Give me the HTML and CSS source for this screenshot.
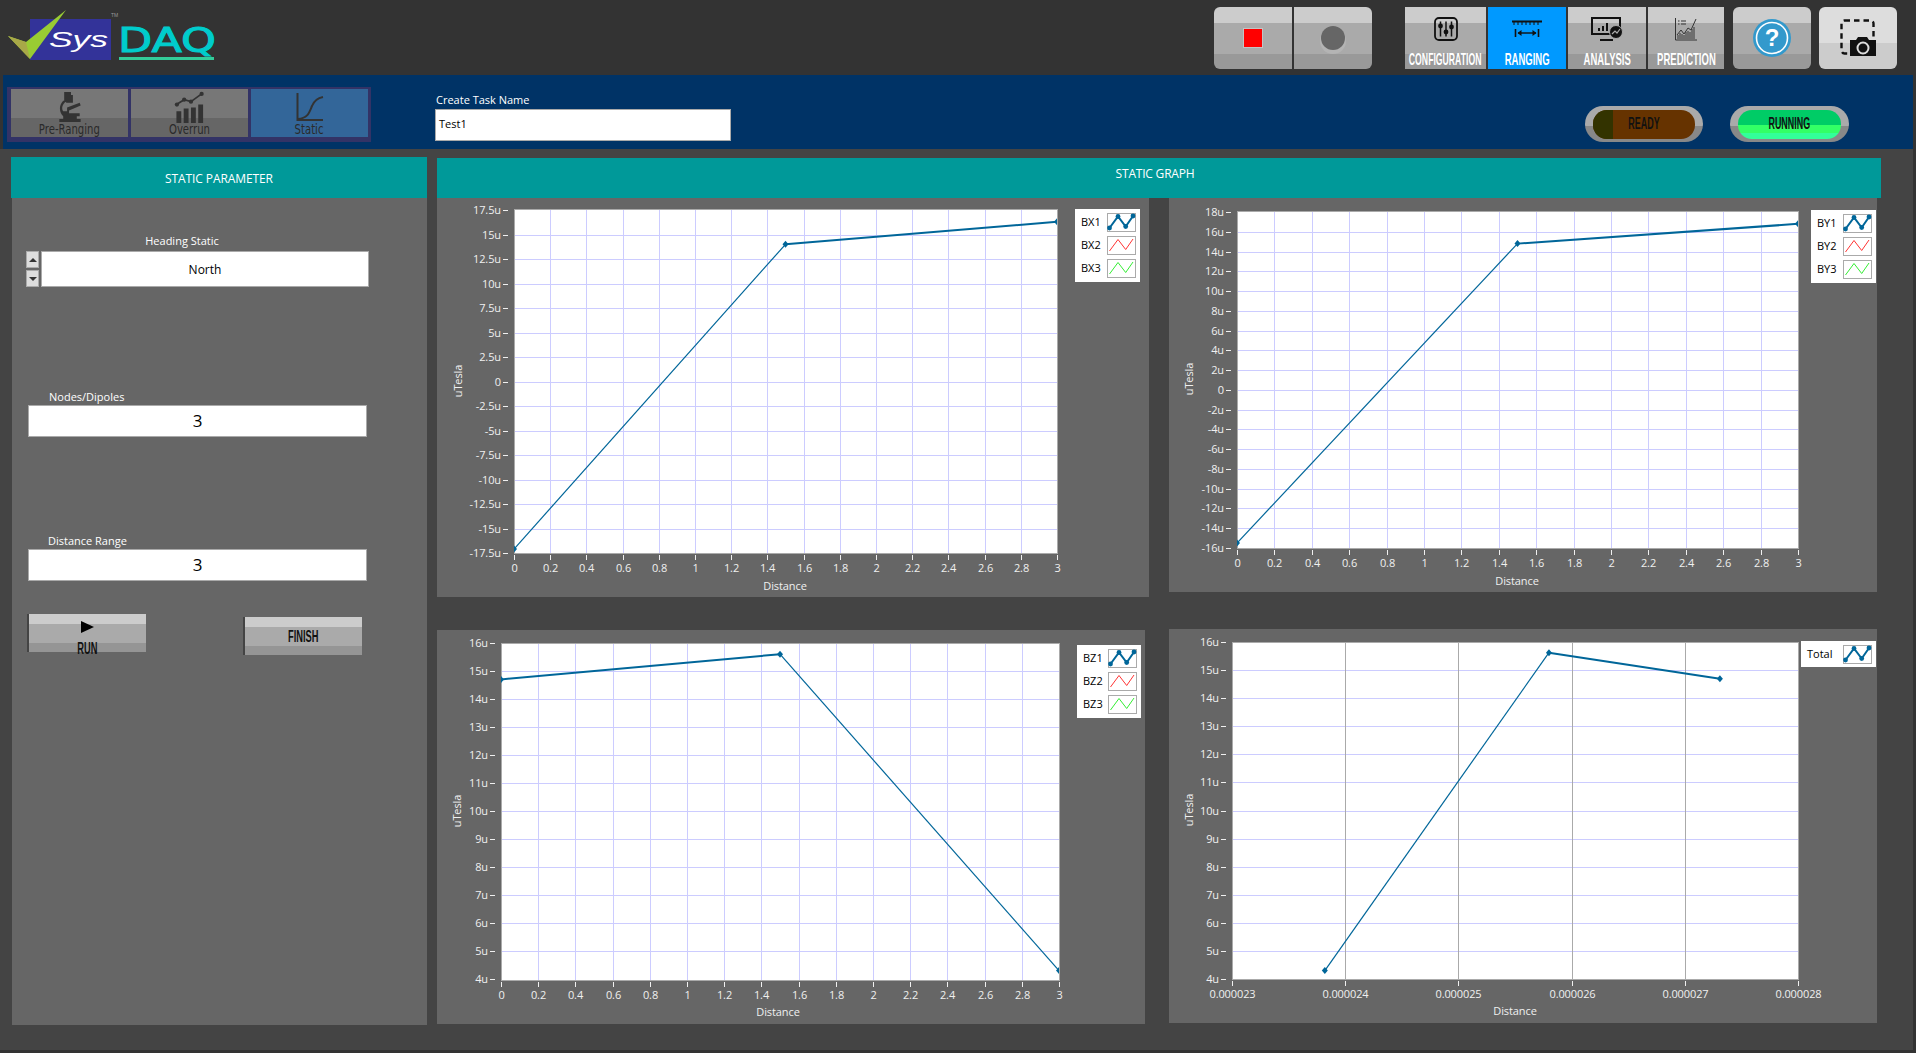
FILE: index.html
```html
<!DOCTYPE html>
<html>
<head>
    <title>SysDAQ Ranging</title>
    <link rel="stylesheet" href="styles.css">
</head>
<body>
    <div class="topbar">
        <svg class="logo" width="220" height="66" viewBox="0 7 220 66">
            <rect x="30" y="19" width="81" height="41" fill="#333399"/>
            <path d="M8 36 L26 42 L66 10 L30 59 Z" fill="#99cc33"/>
            <path d="M8 36 L26 42 L30 59 Z" fill="#a8a848"/>
            <text x="49" y="47" class="logo-sys" textLength="59" lengthAdjust="spacingAndGlyphs">Sys</text>
            <text x="111" y="17" class="logo-tm">TM</text>
            <text x="118" y="52" class="logo-daq" textLength="98" lengthAdjust="spacingAndGlyphs">DAQ</text>
            <rect x="119" y="57" width="95" height="3" fill="#33cc99"/>
        </svg>
        <div class="run-group">
            <div class="face square-left">
                <span class="stop-icon"></span>
            </div>
            <div class="face square-right">
                <span class="rec-icon"></span>
            </div>
        </div>
        <div class="nav">
            <div class="face nav-item nav-config">
                <div class="nav-icon">
                    <svg width="24" height="24" viewBox="0 0 24 24">
                        <rect x="1" y="1" width="22" height="22" rx="4" fill="none" stroke="#111" stroke-width="1.8"/>
                        <path d="M6.5 4.5V19.5M12 4.5V19.5M17.5 4.5V19.5" stroke="#111" stroke-width="1.5"/>
                        <circle cx="6.5" cy="9" r="2.4" fill="#111"/>
                        <circle cx="12" cy="15" r="2.4" fill="#111"/>
                        <circle cx="17.5" cy="10" r="2.4" fill="#111"/>
                    </svg>
                </div>
                <span class="cond nav-label label-config">CONFIGURATION</span>
            </div>
            <div class="face nav-item nav-active">
                <div class="nav-icon">
                    <svg width="30" height="18" viewBox="0 0 30 18">
                        <path d="M0 1.5H30" stroke="#111" stroke-width="2"/>
                        <path d="M2 2V5M6 2V5M10 2V5M14 2V5M18 2V5M22 2V5M26 2V5" stroke="#111" stroke-width="1"/>
                        <path d="M3.5 9V17M26.5 9V17" stroke="#111" stroke-width="1.6"/>
                        <path d="M6 13H24" stroke="#111" stroke-width="1.4"/>
                        <path d="M5.5 13L9.5 10V16ZM24.5 13L20.5 10V16Z" fill="#111"/>
                    </svg>
                </div>
                <span class="cond nav-label">RANGING</span>
            </div>
            <div class="face nav-item">
                <div class="nav-icon">
                    <svg width="32" height="24" viewBox="0 0 32 24">
                        <path d="M1 1H29V17H1Z" fill="none" stroke="#111" stroke-width="2"/>
                        <path d="M9 23H22" stroke="#111" stroke-width="2"/>
                        <path d="M7 14V11H9V14ZM11 14V9H13V14ZM15 14V6H17V14Z" fill="#111"/>
                        <circle cx="25" cy="15" r="6.5" fill="#111" stroke="#aaa" stroke-width="1"/>
                        <path d="M21 17L24 14L26 16L29 12" fill="none" stroke="#aaa" stroke-width="1.2"/>
                    </svg>
                </div>
                <span class="cond nav-label">ANALYSIS</span>
            </div>
            <div class="face nav-item nav-predict">
                <div class="nav-icon">
                    <svg width="24" height="24" viewBox="0 0 24 24">
                        <path d="M1.5 1V23H23" fill="none" stroke="#333" stroke-width="1"/>
                        <path d="M4 4H5.5M7 4H12M4 7H5.5M7 7H12" stroke="#333" stroke-width="1"/>
                        <path d="M3 18L7 13L10 17L14 11L17 13L22 2" fill="none" stroke="#333" stroke-width="1"/>
                        <path d="M4 22V18M6 22V16M8 22V17M10 22V18M12 22V15M14 22V14M16 22V15M18 22V12M20 22V10" stroke="#333" stroke-width="1"/>
                    </svg>
                </div>
                <span class="cond nav-label">PREDICTION</span>
            </div>
        </div>
        <div class="face round-btn help-btn">
            <svg width="40" height="40" viewBox="0 0 40 40">
                <circle cx="20" cy="20" r="19" fill="#3399cc"/>
                <circle cx="20" cy="20" r="15.5" fill="#3399cc" stroke="#fff" stroke-width="1.6"/>
                <text x="20" y="28" class="help-mark">?</text>
            </svg>
        </div>
        <div class="round-btn camera-btn">
            <svg width="38" height="38" viewBox="0 0 38 38">
                <rect x="1.500" y="1.500" width="32" height="33" rx="3" fill="none" stroke="#111" stroke-width="2.4" stroke-dasharray="5.5 4"/>
                <path d="M10 21H16L18 18H27L29 21H36V37H10Z" fill="#111"/>
                <circle cx="23" cy="29" r="5.5" fill="none" stroke="#ddd" stroke-width="2"/>
            </svg>
        </div>
    </div>

    <div class="band">
        <div class="tabs">
            <div class="tab">
                <svg class="tab-icon" width="24" height="33" viewBox="0 0 24 33">
                    <path d="M6 1H13V4H15V12H8V11C4 13 3 18 5 21H9V17L22 12L23 15L11 20V23H22V26H19V29H23V32H1V29H5V26C1 22 0 15 5 10H6Z" fill="#333"/>
                </svg>
                <span class="cond tab-label">Pre-Ranging</span>
            </div>
            <div class="tab">
                <svg class="tab-icon" width="32" height="33" viewBox="0 0 32 33">
                    <path d="M2 21H7V33H2ZM9.5 18H14.5V33H9.5ZM17 17H22V33H17ZM24.500 14H29.500V33H24.500Z" fill="#333"/>
                    <path d="M2 14L10 9L17 11L28 3" fill="none" stroke="#333" stroke-width="1.8"/>
                    <circle cx="2.500" cy="14" r="2.200" fill="#333"/>
                    <circle cx="10" cy="9" r="2.200" fill="#333"/>
                    <circle cx="17" cy="11" r="2.200" fill="#333"/>
                    <circle cx="28" cy="3" r="2.200" fill="#333"/>
                </svg>
                <span class="cond tab-label">Overrun</span>
            </div>
            <div class="tab tab-active">
                <svg class="tab-icon" width="28" height="30" viewBox="0 0 28 30">
                    <path d="M1.500 1V28H27" fill="none" stroke="#333" stroke-width="2"/>
                    <path d="M2 27C12 26 13 21 16 14C18 9 22 6 27 5" fill="none" stroke="#333" stroke-width="2"/>
                </svg>
                <span class="cond tab-label">Static</span>
            </div>
        </div>
        <div class="task">
            <div class="task-label">Create Task Name</div>
            <div class="task-input">Test1</div>
        </div>
        <div class="pill pill-ready">
            <div class="pill-inner">
                <span class="pill-dark"></span>
                <span class="cond pill-text">READY</span>
            </div>
        </div>
        <div class="pill pill-running">
            <div class="pill-inner">
                <span class="cond pill-text">RUNNING</span>
            </div>
        </div>
    </div>

    <div class="main">
        <div class="side">
            <div class="head">STATIC PARAMETER</div>
            <div class="side-body">
                <div class="field-label heading-label">Heading Static</div>
                <div class="ring">
                    <div class="spin">
                        <span class="spin-btn"><i class="arrow-up"></i></span>
                        <span class="spin-btn"><i class="arrow-down"></i></span>
                    </div>
                    <div class="ring-value">North</div>
                </div>
                <div class="field-label nodes-label">Nodes/Dipoles</div>
                <div class="num-input">3</div>
                <div class="field-label range-label">Distance Range</div>
                <div class="num-input">3</div>
                <div class="actions">
                    <div class="action run-btn">
                        <i class="play"></i>
                        <span class="cond action-text">RUN</span>
                    </div>
                    <div class="action finish-btn">
                        <span class="cond action-text">FINISH</span>
                    </div>
                </div>
            </div>
        </div>
        <div class="content">
            <div class="head head-graph">STATIC GRAPH</div>
            <div class="graphs">
                <div class="chart chart-x" id="chartX"></div>
                <div class="chart chart-y" id="chartY"></div>
                <div class="chart chart-z" id="chartZ"></div>
                <div class="chart chart-total" id="chartTotal"></div>
            </div>
        </div>
    </div>

    <script src="charts.js"></script>
</body>
</html>
```

FILE: styles.css
```css
* {
    box-sizing: border-box;
}
html, body {
    margin: 0;
    padding: 0;
}
body {
    width: 1916px;
    height: 1053px;
    overflow: hidden;
    background-color: #333333;
    font-family: "Open Sans", sans-serif;
    font-size: 11px;
}

/* condensed button lettering */
.cond {
    display: inline-block;
    font-family: "Liberation Sans", sans-serif;
    font-weight: bold;
    white-space: nowrap;
    transform: scaleX(0.6);
}

/* top bar */
.topbar {
    display: flex;
    align-items: flex-start;
    height: 74px;
    padding-top: 7px;
}
.logo {
    margin-right: 994px;
    flex: none;
}
.logo-sys {
    font-family: "Liberation Sans", sans-serif;
    font-style: italic;
    font-size: 22px;
    fill: #ffffff;
}
.logo-tm {
    font-family: "Liberation Sans", sans-serif;
    font-size: 5px;
    fill: #999999;
}
.logo-daq {
    font-family: "DejaVu Sans", sans-serif;
    font-size: 34px;
    fill: #00cccc;
    stroke: #00cccc;
    stroke-width: 1px;
}
.face {
    background: linear-gradient(#cccccc 0 16px, #aaaaaa 16px 47px, #999999 47px);
}
.run-group {
    display: flex;
    gap: 2px;
    flex: none;
}
.square-left, .square-right {
    display: flex;
    align-items: center;
    justify-content: center;
    width: 78px;
    height: 62px;
}
.square-left {
    border-radius: 6px 0 0 6px;
}
.square-right {
    border-radius: 0 6px 6px 0;
}
.stop-icon {
    width: 18px;
    height: 18px;
    background-color: #ff0000;
    box-shadow: 0 0 0 1px #c4c4c4;
}
.rec-icon {
    width: 24px;
    height: 24px;
    border-radius: 50%;
    background-color: #666666;
    box-shadow: 0 3px 0 1px #b4b4b4;
}
.nav {
    display: flex;
    gap: 2px;
    margin-left: 33px;
    flex: none;
}
.nav-item {
    display: flex;
    flex-direction: column;
    align-items: center;
    width: 78px;
    height: 62px;
}
.nav-config {
    width: 81px;
}
.nav-predict {
    width: 76px;
}
.nav-active {
    background: #0099ff;
}
.nav-icon {
    display: flex;
    align-items: center;
    justify-content: center;
    height: 44px;
}
.nav-label {
    font-size: 17px;
    line-height: 17px;
    color: #ffffff;
    transform: scaleX(0.56);
}
.label-config {
    transform: scaleX(0.51);
}
.round-btn {
    display: flex;
    align-items: center;
    justify-content: center;
    width: 78px;
    height: 62px;
    border-radius: 6px;
    flex: none;
}
.help-btn {
    margin-left: 9px;
}
.camera-btn {
    margin-left: 8px;
    padding-left: 2px;
    background: linear-gradient(#dddddd 0 36px, #cccccc 36px);
}
.help-mark {
    font-family: "Liberation Sans", sans-serif;
    font-weight: bold;
    font-size: 24px;
    text-anchor: middle;
    fill: #ffffff;
}

/* blue band */
.band {
    display: flex;
    align-items: flex-start;
    width: 1910px;
    height: 74px;
    margin: 1px 0 0 3px;
    background-color: #003366;
}
.tabs {
    display: flex;
    gap: 3px;
    width: 364px;
    height: 55px;
    margin: 12px 0 0 4px;
    padding: 2px 3px 5px 4px;
    background-color: #333366;
    flex: none;
}
.tab {
    display: flex;
    flex-direction: column;
    align-items: center;
    width: 117px;
    height: 48px;
    background: linear-gradient(#777777 0 29px, #666666 29px);
}
.tab-active {
    background: #336699;
}
.tab-icon {
    height: 32px;
    margin-top: 2px;
    flex: none;
}
.tab-label {
    margin-top: -1px;
    font-family: "DejaVu Sans", sans-serif;
    font-weight: normal;
    font-size: 14px;
    line-height: 14px;
    color: #2a2a2a;
    transform: scaleX(0.72);
}
.task {
    width: 296px;
    margin: 17px 0 0 64px;
    flex: none;
}
.task-label {
    height: 17px;
    padding-left: 1px;
    line-height: 16px;
    color: #ffffff;
}
.task-input {
    height: 32px;
    padding-left: 3px;
    border: 1px solid #aaaaaa;
    background-color: #ffffff;
    line-height: 28px;
    color: #000000;
}
.pill {
    display: flex;
    align-items: center;
    height: 36px;
    margin-top: 31px;
    padding: 0 8px;
    border-radius: 18px;
    background: linear-gradient(#aaaaaa 0 20px, #888888 20px);
    flex: none;
}
.pill-ready {
    width: 118px;
    margin-left: 854px;
}
.pill-running {
    width: 119px;
    margin-left: 27px;
}
.pill-inner {
    display: flex;
    align-items: center;
    justify-content: center;
    width: 100%;
    height: 29px;
    border-radius: 14px;
    overflow: hidden;
    position: relative;
}
.pill-ready .pill-inner {
    background-color: #663300;
}
.pill-running .pill-inner {
    background: linear-gradient(#00cc66 0 15px, #33ff66 15px 23px, #33ff99 23px);
}
.pill-dark {
    position: absolute;
    left: 0;
    top: 0;
    width: 20px;
    height: 100%;
    background-color: #333300;
}
.pill-text {
    font-size: 16px;
    color: #111111;
    transform: scaleX(0.56);
}

/* main area */
.main {
    display: flex;
    width: 1913px;
    height: 901px;
    padding: 8px 0 0 11px;
    background-color: #444444;
}
.side {
    width: 416px;
    height: 868px;
    flex: none;
}
.head {
    height: 41px;
    background-color: #009999;
    color: #ffffff;
    font-size: 12px;
    letter-spacing: -0.1px;
    line-height: 43px;
    text-align: center;
}
.side-body {
    height: 827px;
    margin-left: 1px;
    padding: 34px 0 0 14px;
    background-color: #666666;
}
.field-label {
    height: 16px;
    line-height: 18px;
    color: #ffffff;
}
.heading-label {
    width: 312px;
    margin-bottom: 3px;
    text-align: center;
}
.ring {
    display: flex;
    gap: 2px;
    height: 36px;
}
.spin {
    display: flex;
    flex-direction: column;
    justify-content: space-between;
    width: 13px;
}
.spin-btn {
    display: flex;
    align-items: center;
    justify-content: center;
    height: 17px;
    background-color: #dddddd;
    border: 1px solid #aaaaaa;
}
.arrow-up, .arrow-down {
    width: 0;
    height: 0;
    border-left: 4px solid transparent;
    border-right: 4px solid transparent;
}
.arrow-up {
    border-bottom: 4px solid #333333;
}
.arrow-down {
    border-top: 4px solid #333333;
}
.ring-value {
    width: 328px;
    border: 1px solid #aaaaaa;
    background-color: #ffffff;
    color: #000000;
    font-size: 12px;
    line-height: 35px;
    text-align: center;
}
.nodes-label {
    margin: 101px 0 1px 23px;
}
.range-label {
    margin: 95px 0 1px 22px;
}
.num-input {
    width: 339px;
    height: 32px;
    margin-left: 2px;
    border: 1px solid #aaaaaa;
    background-color: #ffffff;
    color: #000000;
    font-size: 17px;
    line-height: 30px;
    text-align: center;
}
.actions {
    display: flex;
    align-items: flex-start;
    margin: 33px 0 0 1px;
}
.action {
    display: flex;
    flex-direction: column;
    align-items: center;
    justify-content: center;
    width: 119px;
    height: 38px;
    border-left: 2px solid #444444;
    background: linear-gradient(#cccccc 0 10px, #aaaaaa 10px 29px, #959595 29px);
}
.finish-btn {
    margin: 3px 0 0 97px;
}
.run-btn {
    justify-content: flex-start;
    padding-top: 7px;
}
.run-btn .action-text {
    margin-top: 9px;
}
.play {
    width: 0;
    height: 0;
    flex: none;
    border-left: 13px solid #000000;
    border-top: 6.5px solid transparent;
    border-bottom: 6.5px solid transparent;
}
.action-text {
    font-size: 16px;
    line-height: 13px;
    color: #111111;
    transform: scaleX(0.58);
}

/* graphs */
.content {
    width: 1444px;
    margin: 1px 0 0 10px;
    flex: none;
}
.head-graph {
    height: 40px;
    padding: 0 8px 9px 0;
    letter-spacing: -0.2px;
    line-height: 31px;
}
.graphs {
    display: grid;
    grid-template-columns: 732px 712px;
    grid-template-rows: 431px 394px;
}
.chart {
    background-color: #666666;
}
.chart svg {
    display: block;
}
.chart-x {
    width: 712px;
    height: 399px;
}
.chart-y {
    width: 708px;
    height: 394px;
}
.chart-z {
    width: 708px;
    height: 394px;
    margin-top: 1px;
}
.chart-total {
    width: 708px;
    height: 394px;
}
.tick-text, .axis-text {
    font-family: "Open Sans", sans-serif;
    font-size: 11px;
    letter-spacing: -0.1px;
    fill: #f0f0f0;
}
.legend-text {
    font-family: "Open Sans", sans-serif;
    font-size: 11px;
    fill: #000000;
}
```

FILE: charts.js
```js
// All coordinates are page pixels, the svg viewBox is set to the panel box
const charts = [
    {
        id: 'chartX', box: [437, 198, 712, 399], plot: [514, 209, 1057, 553],
        yTicks: [-17.5, 17.5, 2.5], xTicks: [0, 3, 0.2], tickPos: [210, 553],
        series: [[0, -17.1], [1.5, 14], [3, 16.3]],
        yLabelX: 462, yLabelY: 381, xLabelX: 785, xLabelY: 590,
        legend: { x: 1075, y: 209, w: 65, names: ['BX1', 'BX2', 'BX3'] }
    },
    {
        id: 'chartY', box: [1169, 198, 708, 394], plot: [1237, 211, 1798, 548],
        yTicks: [-16, 18, 2], xTicks: [0, 3, 0.2], tickPos: [212, 548],
        series: [[0, -15.5], [1.5, 14.8], [3, 16.8]],
        yLabelX: 1193, yLabelY: 379, xLabelX: 1517, xLabelY: 585,
        legend: { x: 1811, y: 210, w: 65, names: ['BY1', 'BY2', 'BY3'] }
    },
    {
        id: 'chartZ', box: [437, 630, 708, 394], plot: [501, 643, 1059, 980],
        yTicks: [4, 16, 1], xTicks: [0, 3, 0.2], tickPos: [643, 979],
        series: [[0, 14.7], [1.5, 15.6], [3, 4.3]],
        yLabelX: 461, yLabelY: 811, xLabelX: 778, xLabelY: 1016,
        legend: { x: 1077, y: 645, w: 64, names: ['BZ1', 'BZ2', 'BZ3'] }
    },
    {
        id: 'chartTotal', box: [1169, 629, 708, 394], plot: [1232, 642, 1798, 979],
        yTicks: [4, 16, 1], xTicks: [23, 28, 1], xScale: 1e-6, xDigits: 6, xGrid: '#aaaaaa', tickPos: [642, 979],
        series: [[23.82, 4.3], [25.8, 15.62], [27.31, 14.69]],
        yLabelX: 1193, yLabelY: 810, xLabelX: 1515, xLabelY: 1015,
        legend: { x: 1801, y: 641, w: 75, names: ['Total'] }
    }
];

const BLUE = '#006699';

function swatch(x, y, color, heavy) {
    const p = [[2.5, 15], [11, 3.500], [18.700, 13.500], [26, 3]].map(q => [x + q[0], y + q[1]]);
    let s = `<rect x="${x + 0.5}" y="${y + 0.5}" width="28" height="18" fill="#fff" stroke="#aaa"/>`;
    s += `<polyline points="${p.join(' ')}" fill="none" stroke="${color}" stroke-width="${heavy ? 2 : 1}"/>`;
    if (heavy) {
        p.forEach(q => { s += `<circle cx="${q[0]}" cy="${q[1]}" r="2.400" fill="${color}"/>`; });
    }
    return s;
}

function drawLegend(lg) {
    const colors = [BLUE, '#ff3333', '#33ee33'];
    const h = lg.names.length === 1 ? 26 : 73;
    let s = `<rect x="${lg.x}" y="${lg.y}" width="${lg.w}" height="${h}" fill="#fff"/>`;
    lg.names.forEach((name, i) => {
        const rowY = lg.y + 4 + i * 23;
        s += `<text class="legend-text" x="${lg.x + 6}" y="${rowY + 13}">${name}</text>`;
        s += swatch(lg.x + lg.w - 33, rowY, colors[i], i === 0);
    });
    return s;
}

function drawChart(c) {
    const [left, top, right, bottom] = c.plot;
    const [yMin, yMax, yStep] = c.yTicks;
    const [xMin, xMax, xStep] = c.xTicks;
    const mapX = v => left + (v - xMin) / (xMax - xMin) * (right - left);
    const mapY = v => c.tickPos[1] - (v - yMin) / (yMax - yMin) * (c.tickPos[1] - c.tickPos[0]);
    const clipId = c.id + 'Clip';

    let s = `<svg width="${c.box[2]}" height="${c.box[3]}" viewBox="${c.box.join(' ')}">`;
    s += `<clipPath id="${clipId}"><rect x="${left}" y="${top}" width="${right - left}" height="${bottom - top}"/></clipPath>`;
    s += `<rect x="${left + 0.5}" y="${top + 0.5}" width="${right - left}" height="${bottom - top}" fill="#fff"/>`;

    // horizontal grid and y ticks
    const yCount = Math.round((yMax - yMin) / yStep);
    for (let i = 0; i <= yCount; i++) {
        const v = yMin + i * yStep;
        const y = Math.round(mapY(v)) + 0.5;
        if (i > 0 && i < yCount) {
            s += `<path d="M${left} ${y}H${right}" stroke="#ccccff"/>`;
        }
        s += `<path d="M${left - 11} ${y}H${left - 6}" stroke="#f0f0f0"/>`;
        s += `<text class="tick-text" x="${left - 13}" y="${y + 3.500}" text-anchor="end">${v === 0 ? '0' : v + 'u'}</text>`;
    }

    // vertical grid and x ticks
    const xCount = Math.round((xMax - xMin) / xStep);
    for (let i = 0; i <= xCount; i++) {
        const v = xMin + i * xStep;
        const x = Math.round(mapX(v)) + 0.5;
        if (i > 0 && i < xCount) {
            s += `<path d="M${x} ${top}V${bottom}" stroke="${c.xGrid || '#ccccff'}"/>`;
        }
        const label = c.xScale ? (v * c.xScale).toFixed(c.xDigits) : String(parseFloat(v.toFixed(1)));
        s += `<path d="M${x} ${bottom + 2}V${bottom + 7}" stroke="#f0f0f0"/>`;
        s += `<text class="tick-text" x="${x}" y="${bottom + 19}" text-anchor="middle">${label}</text>`;
    }

    s += `<rect x="${left + 0.5}" y="${top + 0.5}" width="${right - left}" height="${bottom - top}" fill="none" stroke="#aaa"/>`;

    // data line, the steep segments come out thinner on this graph
    s += `<g clip-path="url(#${clipId})">`;
    const pts = c.series.map(p => [mapX(p[0]), mapY(p[1])]);
    pts.forEach((p, i) => {
        if (i > 0) {
            const q = pts[i - 1];
            const steep = Math.abs(p[1] - q[1]) > Math.abs(p[0] - q[0]) / 2;
            s += `<line x1="${q[0]}" y1="${q[1]}" x2="${p[0]}" y2="${p[1]}" stroke="${BLUE}" stroke-width="${steep ? 1.2 : 2}"/>`;
        }
        s += `<path d="M${p[0] - 3} ${p[1]}L${p[0]} ${p[1] - 3.500}L${p[0] + 3} ${p[1]}L${p[0]} ${p[1] + 3.500}Z" fill="${BLUE}"/>`;
    });
    s += '</g>';

    s += `<text class="axis-text" x="${c.xLabelX}" y="${c.xLabelY}" text-anchor="middle">Distance</text>`;
    s += `<text class="axis-text" x="${c.yLabelX}" y="${c.yLabelY}" text-anchor="middle" transform="rotate(-90 ${c.yLabelX} ${c.yLabelY})">uTesla</text>`;
    s += drawLegend(c.legend);
    s += '</svg>';
    document.getElementById(c.id).innerHTML = s;
}

charts.forEach(drawChart);
```
